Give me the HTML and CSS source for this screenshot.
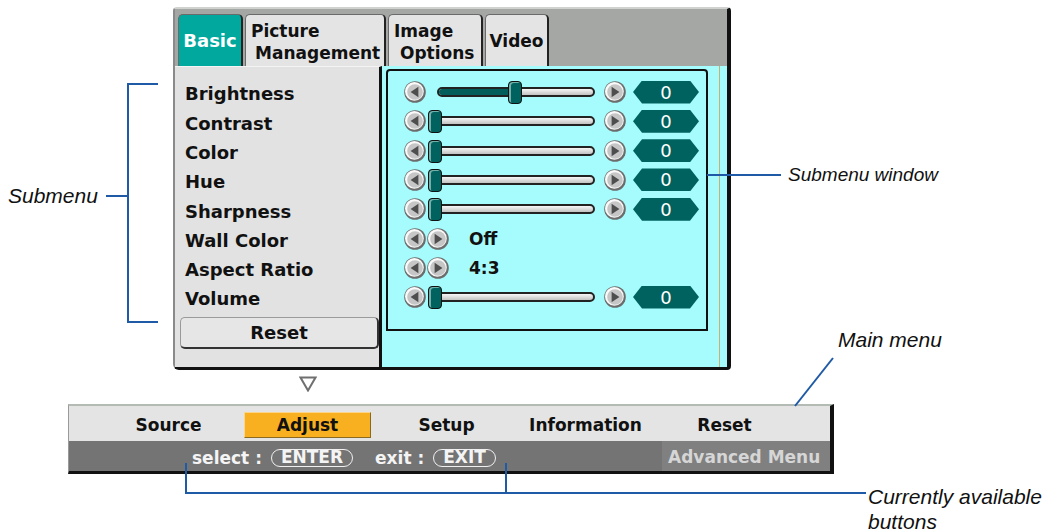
FILE: index.html
```html
<!DOCTYPE html>
<html lang="en">
<head>
<meta charset="UTF-8">
<meta name="viewport" content="width=device-width, initial-scale=1.0">
<title>Projector Menu - Adjust</title>
<link rel="stylesheet" href="styles.css">
</head>
<body>
<svg class="defs" width="0" height="0">
    <defs>
        <symbol id="arrow-left" viewBox="0 0 22 22">
            <circle cx="11" cy="11" r="10.8" fill="#6c6c6c"/>
            <circle cx="10.4" cy="10.4" r="9.4" fill="#fafafa"/>
            <circle cx="11" cy="11" r="7.8" fill="#c6c6c6"/>
            <polygon points="14.4,5.8 6.6,11 14.4,16.2" fill="#4e4e4e"/>
        </symbol>
        <symbol id="arrow-right" viewBox="0 0 22 22">
            <circle cx="11" cy="11" r="10.8" fill="#6c6c6c"/>
            <circle cx="10.4" cy="10.4" r="9.4" fill="#fafafa"/>
            <circle cx="11" cy="11" r="7.8" fill="#c6c6c6"/>
            <polygon points="7.6,5.8 15.4,11 7.6,16.2" fill="#4e4e4e"/>
        </symbol>
    </defs>
</svg>

<div class="page">
    <div class="osd">
        <div class="tabs">
            <div class="tab tab-basic active">Basic</div>
            <div class="tab tab-picture two-line"><span>Picture</span><span class="second">Management</span></div>
            <div class="tab tab-image two-line"><span>Image</span><span class="second">Options</span></div>
            <div class="tab tab-video">Video</div>
        </div>
        <div class="osd-body">
            <div class="submenu">
                <div class="item">Brightness</div>
                <div class="item">Contrast</div>
                <div class="item">Color</div>
                <div class="item">Hue</div>
                <div class="item">Sharpness</div>
                <div class="item">Wall Color</div>
                <div class="item">Aspect Ratio</div>
                <div class="item">Volume</div>
                <div class="reset-btn">Reset</div>
            </div>
            <div class="panel">
                <div class="subwin">
                    <div class="row">
                        <svg class="btn"><use href="#arrow-left"/></svg>
                        <div class="slider">
                            <div class="track"><div class="fill" style="width: 50%"></div></div>
                            <div class="knob" style="left: 82px"></div>
                        </div>
                        <svg class="btn"><use href="#arrow-right"/></svg>
                        <div class="value">0</div>
                    </div>
                    <div class="row">
                        <svg class="btn"><use href="#arrow-left"/></svg>
                        <div class="slider">
                            <div class="track"><div class="fill" style="width: 0%"></div></div>
                            <div class="knob" style="left: 2px"></div>
                        </div>
                        <svg class="btn"><use href="#arrow-right"/></svg>
                        <div class="value">0</div>
                    </div>
                    <div class="row">
                        <svg class="btn"><use href="#arrow-left"/></svg>
                        <div class="slider">
                            <div class="track"><div class="fill" style="width: 0%"></div></div>
                            <div class="knob" style="left: 2px"></div>
                        </div>
                        <svg class="btn"><use href="#arrow-right"/></svg>
                        <div class="value">0</div>
                    </div>
                    <div class="row">
                        <svg class="btn"><use href="#arrow-left"/></svg>
                        <div class="slider">
                            <div class="track"><div class="fill" style="width: 0%"></div></div>
                            <div class="knob" style="left: 2px"></div>
                        </div>
                        <svg class="btn"><use href="#arrow-right"/></svg>
                        <div class="value">0</div>
                    </div>
                    <div class="row">
                        <svg class="btn"><use href="#arrow-left"/></svg>
                        <div class="slider">
                            <div class="track"><div class="fill" style="width: 0%"></div></div>
                            <div class="knob" style="left: 2px"></div>
                        </div>
                        <svg class="btn"><use href="#arrow-right"/></svg>
                        <div class="value">0</div>
                    </div>
                    <div class="row">
                        <svg class="btn"><use href="#arrow-left"/></svg>
                        <svg class="btn btn-pair"><use href="#arrow-right"/></svg>
                        <span class="option">Off</span>
                    </div>
                    <div class="row">
                        <svg class="btn"><use href="#arrow-left"/></svg>
                        <svg class="btn btn-pair"><use href="#arrow-right"/></svg>
                        <span class="option">4:3</span>
                    </div>
                    <div class="row">
                        <svg class="btn"><use href="#arrow-left"/></svg>
                        <div class="slider">
                            <div class="track"><div class="fill" style="width: 0%"></div></div>
                            <div class="knob" style="left: 2px"></div>
                        </div>
                        <svg class="btn"><use href="#arrow-right"/></svg>
                        <div class="value">0</div>
                    </div>
                </div>
            </div>
        </div>
    </div>

    <div class="more">
        <svg width="18" height="16" viewBox="0 0 18 16"><polygon points="1.5,1.5 16.5,1.5 9,14.5" fill="#fff" stroke="#707070" stroke-width="2"/></svg>
    </div>

    <div class="mainmenu">
        <div class="menu-items">
            <div class="menu-item">Source</div>
            <div class="menu-item active">Adjust</div>
            <div class="menu-item">Setup</div>
            <div class="menu-item">Information</div>
            <div class="menu-item">Reset</div>
        </div>
        <div class="menu-help">
            <span>select :</span>
            <span class="key">ENTER</span>
            <span class="exit-label">exit :</span>
            <span class="key">EXIT</span>
            <span class="advanced">Advanced Menu</span>
        </div>
    </div>

    <!-- callout lines for the diagram -->
    <svg class="callouts" width="1058" height="532">
        <polyline points="158,84 128,84 128,322 158,322" />
        <line x1="106" y1="196" x2="128" y2="196" />
        <line x1="707" y1="175" x2="781" y2="175" />
        <line x1="833" y1="358" x2="795" y2="406" />
        <polyline points="186,463 186,493 866,493" />
        <line x1="506" y1="463" x2="506" y2="493" />
    </svg>
    <div class="note note-submenu">Submenu</div>
    <div class="note note-window">Submenu window</div>
    <div class="note note-main">Main menu</div>
    <div class="note note-buttons">Currently available<br>buttons</div>
</div>
</body>
</html>
```

FILE: styles.css
```css
body {
    margin: 0;
    background-color: #fff;
    font-family: "DejaVu Sans", Verdana, sans-serif;
    font-weight: bold;
    color: #111;
}
.defs {
    position: absolute;
    width: 0;
    height: 0;
}
.page {
    position: relative;
    width: 1058px;
    height: 532px;
    overflow: hidden;
}

/* on-screen menu window */
.osd {
    width: 558px;
    margin: 7px 0 0 173px;
    box-sizing: border-box;
    border-top: 2px solid #cfd2cf;
    border-left: 2px solid #8a8a8a;
    border-right: 4px solid #111;
    border-bottom: 3px solid #111;
    border-radius: 4px 4px 4px 6px;
    background-color: #a6fcfc;
}
.tabs {
    display: flex;
    align-items: flex-end;
    gap: 2px;
    height: 57px;
    padding-left: 3px;
    background-color: #a5a7a5;
}
.tab {
    display: flex;
    flex-direction: column;
    justify-content: center;
    align-items: center;
    height: 52px;
    box-sizing: border-box;
    background-color: #e4e4e4;
    border: 1px solid #6a6a6a;
    border-right: 2px solid #222;
    border-bottom: none;
    border-radius: 5px 5px 0 0;
    font-size: 17px;
    line-height: 22px;
}
.tab-basic {
    width: 65px;
    background-color: #00a89e;
    color: #fff;
    font-size: 18px;
}
.tab-picture {
    width: 141px;
}
.tab-image {
    width: 95px;
}
.tab-video {
    width: 64px;
}
.two-line {
    align-items: flex-start;
    padding-left: 5px;
    padding-top: 2px;
}
.two-line .second {
    padding-left: 6px;
}
.tab-picture .second {
    padding-left: 4px;
}

.osd-body {
    display: flex;
    height: 301px;
}
.submenu {
    width: 207px;
    padding: 12.4px 0 0 5px;
    box-sizing: border-box;
    background-color: #e2e2e2;
    border-right: 3px solid #111;
    border-top: 1px solid #f4f4f4;
    font-size: 18px;
}
.submenu .item {
    height: 29.3px;
    line-height: 29.3px;
    padding-left: 5px;
}
.reset-btn {
    width: 199px;
    height: 32px;
    margin-top: 3.4px;
    box-sizing: border-box;
    background-color: #e6e6e6;
    border: 1px solid #9a9a9a;
    border-right: 2px solid #333;
    border-bottom: 2px solid #333;
    border-radius: 5px;
    text-align: center;
    line-height: 29px;
    font-size: 18px;
}
.panel {
    width: 338px;
    margin-right: 4px;
    padding: 3px 0 0 4px;
    box-sizing: border-box;
    background-color: #a6fcfc;
    border-right: 1px solid #c8b070;
}
.subwin {
    width: 322px;
    height: 262px;
    box-sizing: border-box;
    padding-top: 6.4px;
    padding-left: 16px;
    border: 2px solid #111;
    border-radius: 4px 4px 0 0;
}
.row {
    display: flex;
    align-items: center;
    height: 29.3px;
}
.btn {
    width: 22px;
    height: 22px;
    flex: none;
}
.btn-pair {
    margin-left: 1px;
}
.slider {
    position: relative;
    display: flex;
    align-items: center;
    width: 178px;
    height: 24px;
}
.track {
    width: 158px;
    height: 10px;
    margin-left: 11px;
    box-sizing: border-box;
    border: 2px solid #222;
    border-radius: 5px;
    background: linear-gradient(#f6f6f6, #c2c2c2);
    overflow: hidden;
}
.fill {
    height: 100%;
    background-color: #005f5b;
}
.knob {
    position: absolute;
    top: 1px;
    width: 14px;
    height: 23px;
    box-sizing: border-box;
    background-color: #00625e;
    border: 1.5px solid #111;
    border-radius: 4px;
    box-shadow: inset 2px 1px 0 #6fb0ac;
}
.value {
    width: 66px;
    height: 23px;
    margin-left: 7px;
    background-color: #00625e;
    clip-path: polygon(9px 0, 57px 0, 66px 50%, 57px 100%, 9px 100%, 0 50%);
    color: #fff;
    font-size: 18px;
    font-weight: normal;
    line-height: 23px;
    text-align: center;
}
.option {
    margin-left: 20px;
    font-size: 17px;
}

.more {
    height: 34px;
    padding-left: 299px;
}
.more svg {
    margin-top: 6px;
}

/* main menu bar */
.mainmenu {
    width: 766px;
    margin-left: 68px;
    box-sizing: border-box;
    border-top: 2px solid #b4bab4;
    border-left: 1px solid #9a9a9a;
    border-right: 4px solid #111;
    border-bottom: 3px solid #111;
}
.menu-items {
    display: flex;
    align-items: center;
    height: 35px;
    padding: 3px 0 0 30px;
    box-sizing: border-box;
    background-color: #e4e4e4;
    font-size: 17px;
}
.menu-item {
    width: 139px;
    text-align: center;
}
.menu-item.active {
    width: 127px;
    height: 26px;
    margin: 0 6px;
    box-sizing: border-box;
    line-height: 24px;
    background-color: #f8b020;
    border: 1px solid #fbd68a;
    border-right-color: #8a6a20;
    border-bottom-color: #8a6a20;
}
.menu-help {
    display: flex;
    align-items: center;
    height: 30px;
    padding: 3px 0 0 123px;
    box-sizing: border-box;
    background-color: #747474;
    color: #f4f4f4;
    font-size: 17px;
}
.key {
    height: 18px;
    margin-left: 9px;
    padding: 0 9px;
    box-sizing: border-box;
    border: 1.5px solid #f0f0f0;
    border-radius: 9px;
    line-height: 15px;
}
.exit-label {
    margin-left: 22px;
}
.advanced {
    align-self: stretch;
    width: 168px;
    margin: -3px 0 0 auto;
    padding: 3px 0 0 6px;
    box-sizing: border-box;
    background-color: #808080;
    color: #d6d6d6;
    line-height: 27px;
}

/* annotations */
.callouts {
    position: absolute;
    top: 0;
    left: 0;
    pointer-events: none;
}
.callouts line, .callouts polyline {
    fill: none;
    stroke: #1f5aa6;
    stroke-width: 2;
}
.note {
    position: absolute;
    font-family: "Liberation Sans", Arial, sans-serif;
    font-style: italic;
    font-weight: normal;
    font-size: 21px;
    line-height: 22px;
    color: #111;
}
.note-submenu {
    left: 8px;
    top: 185px;
}
.note-window {
    left: 788px;
    top: 164px;
    font-size: 19px;
}
.note-main {
    left: 838px;
    top: 329px;
}
.note-buttons {
    left: 868px;
    top: 484px;
    line-height: 25px;
}
```
